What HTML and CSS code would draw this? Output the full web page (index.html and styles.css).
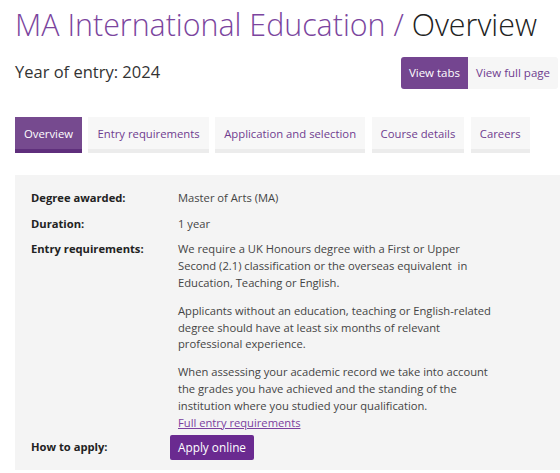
FILE: index.html
```html
<!DOCTYPE html>
<html lang="en">
  <head>
    <meta charset="UTF-8" />
    <meta name="viewport" content="width=device-width, initial-scale=1.0" />
    <title>MA International Education / Overview</title>
    <link rel="stylesheet" href="styles.css">
  </head>
  <body>
    <h1 class="page-title">
      <span class="course-name">MA International Education /</span> Overview
    </h1>

    <div class="year-bar">
      <p class="year">Year of entry: 2024</p>
      <div class="view-switch">
        <a href="#" class="view-btn active">View tabs</a>
        <a href="#" class="view-btn">View full page</a>
      </div>
    </div>

    <ul class="tabs">
      <li class="tab active"><a href="#">Overview</a></li>
      <li class="tab"><a href="#">Entry requirements</a></li>
      <li class="tab"><a href="#">Application and selection</a></li>
      <li class="tab"><a href="#">Course details</a></li>
      <li class="tab"><a href="#">Careers</a></li>
    </ul>

    <!-- key facts -->
    <div class="facts">
      <dl class="fact">
        <dt>Degree awarded:</dt>
        <dd>Master of Arts (MA)</dd>
      </dl>
      <dl class="fact">
        <dt>Duration:</dt>
        <dd>1 year</dd>
      </dl>
      <dl class="fact entry">
        <dt>Entry requirements:</dt>
        <dd>
          <p>
            We require a UK Honours degree with a First or Upper Second (2.1)
            classification or the overseas equivalent&nbsp; in Education,
            Teaching or English.
          </p>
          <p>
            Applicants without an education, teaching or English-related
            degree should have at least six months of relevant professional
            experience.
          </p>
          <p class="last">
            When assessing your academic record we take into account the
            grades you have achieved and the standing of the institution where
            you studied your qualification.
          </p>
          <a href="#" class="more-link">Full entry requirements</a>
        </dd>
      </dl>
      <dl class="fact apply">
        <dt>How to apply:</dt>
        <dd><a href="#" class="apply-btn">Apply online</a></dd>
      </dl>
    </div>
  </body>
</html>
```

FILE: styles.css
```css
/* base */
body {
  margin: 0;
  padding: 0 15px;
  font-family: "Open Sans", "DejaVu Sans", sans-serif;
  font-size: 11.2px;
  line-height: 1.5;
  color: #333;
  overflow: hidden;
}
a {
  text-decoration: none;
}

/** title */
.page-title {
  margin: 5px 0 0;
  font-size: 30.4px;
  font-weight: 300;
  line-height: 1.3;
  color: #222;
  white-space: nowrap;
}
.course-name {
  color: #7b459e;
}

/** year + view switch */
.year-bar {
  display: flex;
  align-items: center;
  justify-content: space-between;
  margin-top: 12px;
  margin-right: -13px;
}
.year {
  margin: 0;
  font-size: 16.5px;
  color: #333;
}
.view-switch {
  display: flex;
  border-radius: 3px;
  overflow: hidden;
}
.view-btn {
  display: block;
  padding: 7px 8px 8px;
  font-size: 11.5px;
  line-height: 17px;
  color: #6f3c8f;
  background: #f6f6f6;
}
.view-btn.active {
  color: white;
  background: #744590;
}

/** tabs */
.tabs {
  display: flex;
  gap: 6.5px;
  margin: 28px 0 0;
  padding: 0;
  list-style: none;
}
.tab a {
  display: block;
  padding: 8px 9px 7px;
  font-size: 11.3px;
  line-height: 17px;
  color: #6f3c8f;
  background: #f7f7f7;
  border-bottom: 4px solid #ececec;
}
.tab.active a {
  color: white;
  background: #764a8f;
  border-bottom-color: #5f2f7c;
}

/** key facts */
.facts {
  margin: 22px -15px 0 0;
  padding: 15.5px 16px 10px;
  background: #f4f4f4;
}
.fact {
  display: grid;
  grid-template-columns: 147px 322px;
  align-items: start;
  margin: 0 0 8.8px;
}
.fact dt {
  font-weight: 700;
  color: #222;
}
.fact dd {
  margin: 0;
  color: #444;
}
.fact p {
  margin: 0 0 11.2px;
}
.fact p.last {
  margin: 0;
}
.fact.entry {
  margin-bottom: 3px;
}
.more-link {
  color: #7b3f9e;
  text-decoration: underline;
}
.fact.apply {
  align-items: center;
  margin: 0;
}
.apply-btn {
  display: inline-block;
  margin-left: -8px;
  padding: 4px 8px;
  border-radius: 2px;
  font-size: 11.8px;
  line-height: 17px;
  color: white;
  background: #6a2a90;
}
```
